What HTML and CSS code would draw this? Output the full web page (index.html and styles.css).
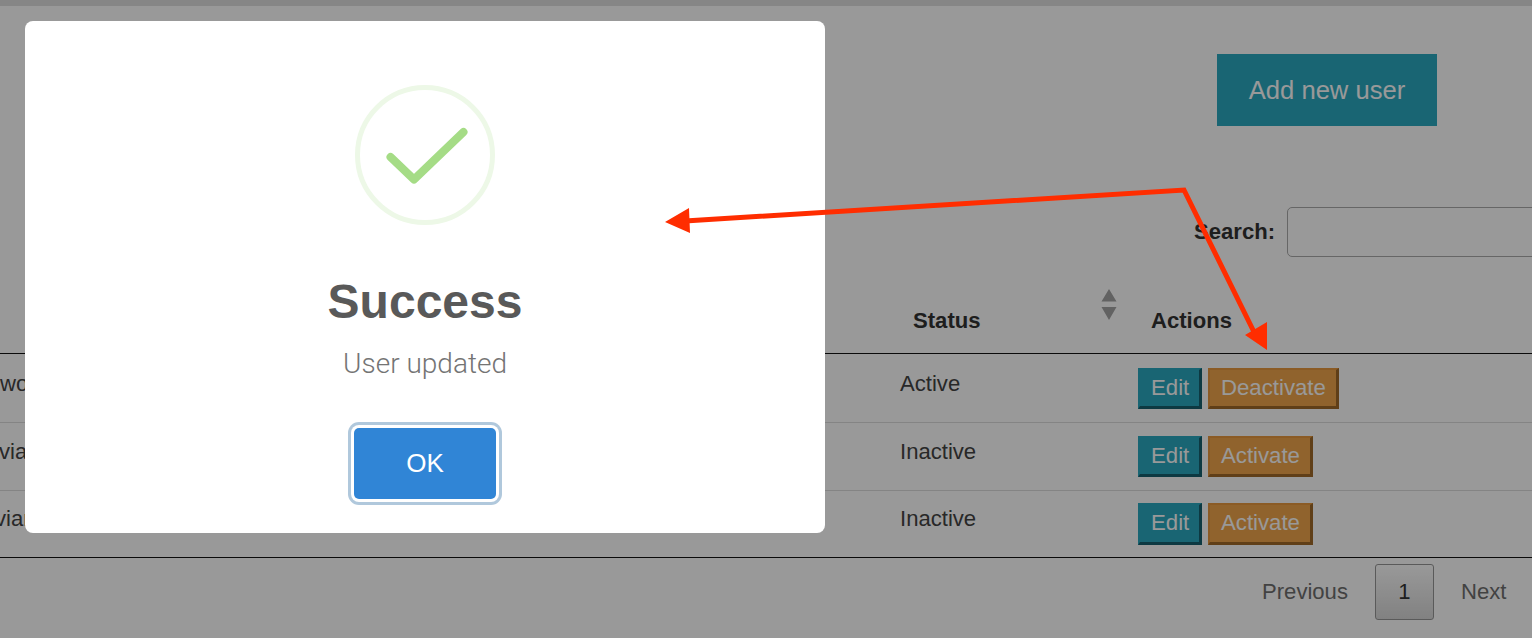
FILE: index.html
```html
<!DOCTYPE html>
<html>
	<head>
		<meta charset="utf-8">
		<title>Users</title>
		<link rel="stylesheet" href="styles.css">
	</head>
	<body>
		<div class="page">
			<div class="topbar"></div>
			<div class="toolbar">
				<button class="add-btn">Add new user</button>
			</div>
			<div class="search">
				<label class="search-label">Search:</label>
				<input class="search-input" type="text">
			</div>
			<table class="users">
				<colgroup>
					<col class="col-name">
					<col class="col-status">
					<col class="col-actions">
				</colgroup>
				<thead>
					<tr>
						<th></th>
						<th class="th-status">Status
							<svg class="sort" width="16" height="31" viewBox="0 0 16 31">
								<path d="M8 0L15.500 12.500H.5zM.5 18H15.500L8 31z" fill="#a4a4a4"/>
							</svg>
						</th>
						<th class="th-actions">Actions</th>
					</tr>
				</thead>
				<tbody>
					<tr class="row-a">
						<td class="name name-a">word</td>
						<td>Active</td>
						<td><button class="btn btn-edit">Edit</button><button class="btn btn-warn">Deactivate</button></td>
					</tr>
					<tr class="row-b">
						<td class="name name-b">vian</td>
						<td>Inactive</td>
						<td><button class="btn btn-edit">Edit</button><button class="btn btn-warn">Activate</button></td>
					</tr>
					<tr class="row-c">
						<td class="name name-c">vian</td>
						<td>Inactive</td>
						<td><button class="btn btn-edit">Edit</button><button class="btn btn-warn">Activate</button></td>
					</tr>
				</tbody>
			</table>
			<div class="pager">
				<span class="pager-link">Previous</span>
				<span class="pager-num">1</span>
				<span class="pager-link">Next</span>
			</div>
		</div>

		<div class="overlay">
			<div class="modal">
				<svg class="check" width="140" height="140" viewBox="0 0 140 140">
					<circle cx="70" cy="70" r="67.500" fill="none" stroke="#edf8e7" stroke-width="5"/>
					<path d="M35.500 72L59 94.500L108.500 47" fill="none" stroke="#a5dc86" stroke-width="8" stroke-linecap="round" stroke-linejoin="round"/>
				</svg>
				<h2 class="modal-title">Success</h2>
				<p class="modal-text">User updated</p>
				<button class="ok-btn">OK</button>
			</div>
		</div>

		<!-- annotation arrows drawn on top of the screenshot -->
		<svg class="arrows" width="1532" height="638" viewBox="0 0 1532 638">
			<path d="M685 221L1184 190L1254 332" fill="none" stroke="#ff2d00" stroke-width="5"/>
			<path d="M665 222L689 208L690 233zM1267 350L1245 335L1267 322z" fill="#ff2d00"/>
		</svg>
	</body>
</html>
```

FILE: styles.css
```css
html, body {
	margin: 0;
	height: 638px;
	overflow: hidden;
	background: #fff;
	font-family: "Liberation Sans", Arial, sans-serif;
}
.page {
	width: 1532px;
	height: 638px;
	overflow: hidden;
	color: #444;
	font-size: 22.100px;
}
.topbar {
	height: 6px;
	background: #dfdfdf;
}
.toolbar {
	display: flex;
	justify-content: flex-end;
	padding: 48px 95px 0 0;
}
.add-btn {
	width: 220px;
	height: 72px;
	border: 0;
	padding: 0;
	background: #2aa9c0;
	color: #fff;
	font-family: inherit;
	font-size: 25.600px;
}
.search {
	display: flex;
	align-items: center;
	margin-top: 81px;
	padding-left: 1194px;
	width: 600px;
}
.search-label {
	font-weight: bold;
	color: #333;
	margin-right: 12px;
}
.search-input {
	flex: none;
	width: 400px;
	height: 50px;
	box-sizing: border-box;
	border: 1px solid #aaa;
	border-radius: 5px;
	background: transparent;
}

/* table */
.users {
	width: 1532px;
	table-layout: fixed;
	border-collapse: collapse;
	margin-top: 0;
	border-bottom: 1px solid #111;
}
.col-name { width: 888px; }
.col-status { width: 238px; }
.col-actions { width: 406px; }
.users thead tr {
	height: 96px;
}
.users th {
	text-align: left;
	vertical-align: bottom;
	padding: 0 0 19px 25px;
	color: #333;
	border-bottom: 1px solid #111;
	position: relative;
}
.sort {
	position: absolute;
	left: 213px;
	top: 32px;
}
.users td {
	vertical-align: top;
	padding: 17px 0 0 12px;
	border-top: 1px solid #ddd;
}
.users tbody tr:first-child td {
	border-top: 0;
}
.row-a { height: 69px; }
.row-b { height: 68px; }
.row-c { height: 67px; }
.users .row-b td { padding-top: 16px; }
.users .row-c td { padding-top: 15px; }
.row-c .btn { height: 42px; }
.users td.name {
	padding-left: 0;
	overflow: hidden;
	white-space: nowrap;
}
.name-a { text-indent: 0; }
.name-b { text-indent: -1px; }
.name-c { text-indent: -5px; }

.btn {
	box-sizing: border-box;
	height: 41px;
	margin: -3px 6px 0 0;
	padding: 0 10.500px 0 11px;
	border-width: 2px 3px 3px 2px;
	border-style: solid;
	color: #fff;
	font-family: inherit;
	font-size: 22.200px;
	vertical-align: top;
}
.btn-edit {
	width: 64px;
	background: #2aa9c0;
	border-color: #2aa9c0 #17606f #17606f #2aa9c0;
}
.btn-warn {
	background: #f0a64c;
	border-color: #e8983e #a06a28 #a06a28 #e8983e;
}
.pager {
	display: flex;
	align-items: center;
	padding: 6px 0 0 1262px;
	width: 270px;
}
.pager-link {
	color: #6f6f6f;
}
.pager-num {
	box-sizing: border-box;
	width: 59px;
	height: 56px;
	margin: 0 27px;
	border: 1px solid #979797;
	border-radius: 3px;
	background: linear-gradient(#fff, #d8d8d8);
	color: #333;
	line-height: 54px;
	text-align: center;
}

/* success dialog */
.overlay {
	position: fixed;
	left: 0;
	top: 0;
	right: 0;
	bottom: 0;
	background: rgba(0, 0, 0, .4);
}
.modal {
	display: flex;
	flex-direction: column;
	align-items: center;
	box-sizing: border-box;
	width: 800px;
	height: 512px;
	margin: 21px 0 0 25px;
	padding-top: 64px;
	background: #fff;
	border-radius: 8px;
}
.check {
	display: block;
}
.modal-title {
	margin: 49px 0 0;
	font-size: 48px;
	line-height: 56px;
	font-weight: bold;
	color: #595959;
}
.modal-text {
	margin: 18px 0 0;
	font-family: Roboto, sans-serif;
	font-weight: 300;
	font-size: 28px;
	line-height: 32px;
	color: #747474;
}
.ok-btn {
	width: 142px;
	height: 71px;
	margin-top: 48px;
	border: 0;
	border-radius: 5px;
	background: #3085d6;
	color: #fff;
	font-family: inherit;
	font-size: 26px;
	box-shadow: 0 0 0 3px #fff, 0 0 0 6px #b0c8dc;
}

.arrows {
	position: fixed;
	left: 0;
	top: 0;
}
```
